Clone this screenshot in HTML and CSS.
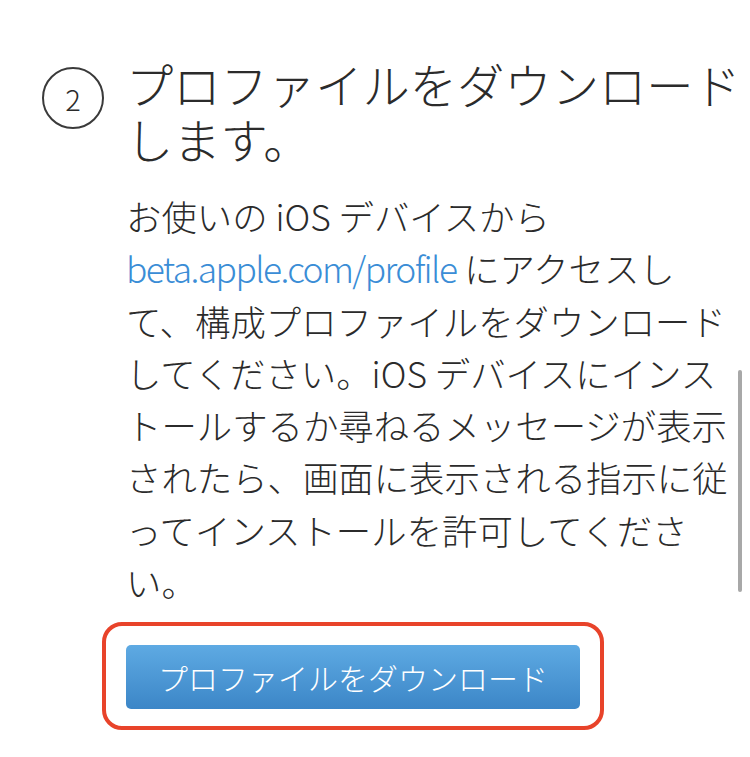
FILE: index.html
```html
<!DOCTYPE html>
<html lang="ja">
<head>
  <meta charset="UTF-8" />
  <title>プロファイルをダウンロード</title>
  <meta name="viewport" content="width=device-width, initial-scale=1" />
  <link rel="stylesheet" href="styles.css">
</head>
<body>
  <main class="step">
    <div class="step-num">2</div>
    <div class="step-body">
      <h2>プロファイルをダウンロードします。</h2>
      <p>お使いの iOS デバイスから <a href="#">beta.apple.com/profile</a> にアクセスして、構成プロファイルをダウンロードしてください。iOS デバイスにインストールするか尋ねるメッセージが表示されたら、画面に表示される指示に従ってインストールを許可してください。</p>
      <div class="highlight">
        <button type="button">プロファイルをダウンロード</button>
      </div>
    </div>
  </main>
  <div class="scroll-thumb"></div>
</body>
</html>
```

FILE: styles.css
```css
body {
  margin: 0;
  font-family: "Noto Sans CJK JP", "Noto Sans", sans-serif;
  background: #fff;
  color: #2b2b2b;
}
.step {
  display: flex;
  align-items: flex-start;
  gap: 22px;
  padding: 56px 0 0 42px;
}
.step-num {
  flex: none;
  width: 58px;
  height: 58px;
  margin-top: 11px;
  border: 2px solid #3a3a3a;
  border-radius: 50%;
  display: flex;
  justify-content: center;
  align-items: center;
  font-size: 29px;
  font-weight: 300;
  line-height: 1;
}
.step-body {
  width: 625px;
}
.step-body h2 {
  margin: 0;
  font-size: 47.3px;
  font-weight: 300;
  line-height: 55px;
}
.step-body p {
  margin: 24px 0 0;
  width: 604px;
  font-size: 35.4px;
  font-weight: 300;
  line-height: 52.3px;
}
.step-body a {
  color: #3a8dd6;
  text-decoration: none;
  letter-spacing: -1.6px;
}
.highlight {
  display: inline-block;
  margin: 14px 0 0 -24px;
  padding: 19px 20px 17px;
  border: 4px solid #e8432a;
  border-radius: 20px;
}
.highlight button {
  display: block;
  width: 454px;
  height: 64px;
  border: none;
  border-radius: 5px;
  background: linear-gradient(#5eaae3, #3c86c7);
  color: #fff;
  font-family: inherit;
  font-size: 30px;
  font-weight: 300;
  cursor: pointer;
}
.scroll-thumb {
  position: absolute;
  left: 738px;
  top: 370px;
  width: 4px;
  height: 222px;
  border-radius: 2px;
  background: #a8a8a8;
}
```
